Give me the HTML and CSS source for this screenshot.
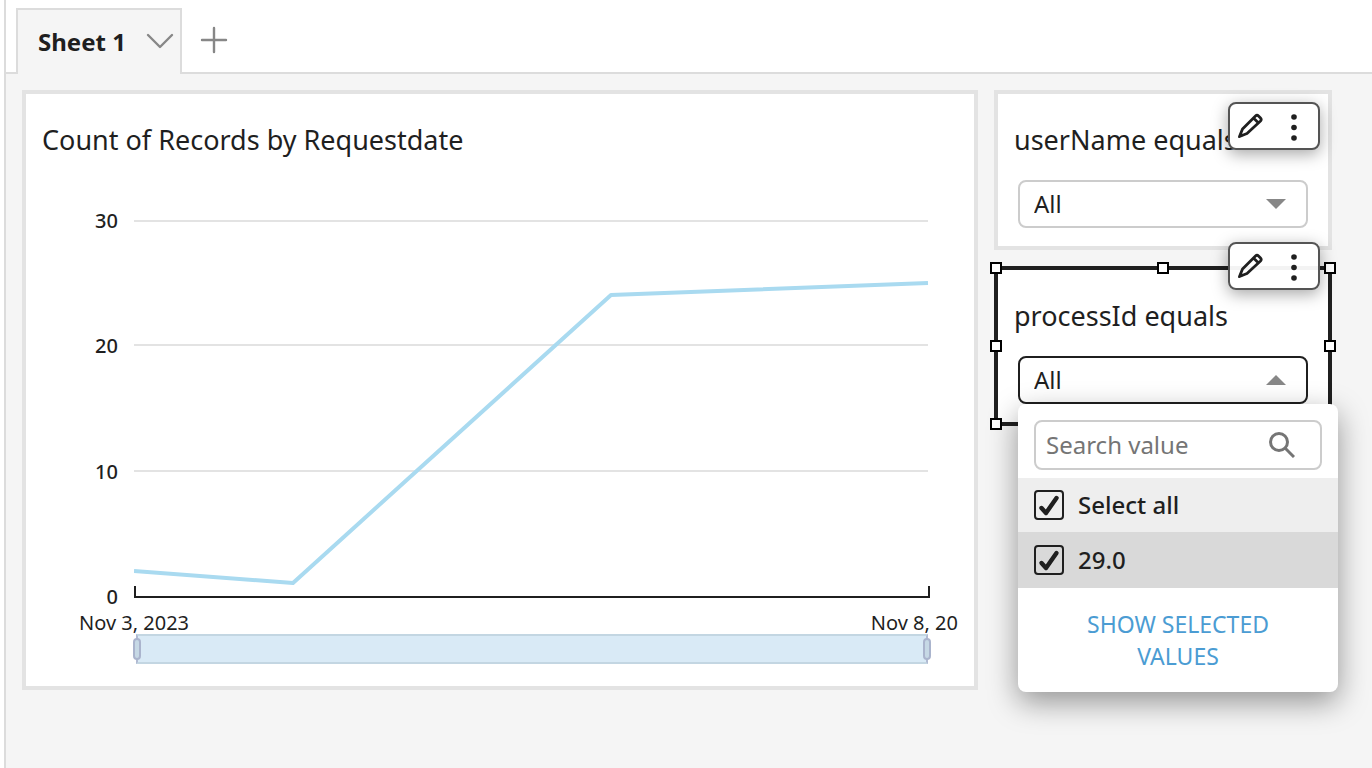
FILE: index.html
```
<!DOCTYPE html>
<html lang="en">
<head>
<meta charset="UTF-8">
<title>Sheet 1</title>
<link rel="stylesheet" href="styles.css">
</head>

<body>

<svg class="defs" aria-hidden="true">
	<symbol id="pencil" viewBox="0 0 28 28">
		<path d="M3.5 24.5 L6.5 17 L19.5 4 Q21 2.5 22.5 4 L24.5 6 Q26 7.5 24.5 9 L11 21.5 Z M17.5 6 L22.5 11" fill="none" stroke="currentColor" stroke-width="2.8" stroke-linejoin="round"/>
		<path d="M2 26 L4.5 20 L8 23.5 Z" fill="currentColor"/>
	</symbol>
	<symbol id="dots" viewBox="0 0 8 31">
		<circle cx="4" cy="6" r="2.8"/>
		<circle cx="4" cy="16.5" r="2.8"/>
		<circle cx="4" cy="27" r="2.8"/>
	</symbol>
</svg>

<div id="wrapper">
	<div id="tabs">
		<div class="tab activetab">
			<a href="#sheet">Sheet 1</a>
			<button type="button" class="icon" aria-label="Sheet menu">
				<svg width="28" height="18" viewBox="0 0 28 18"><path d="M2 2 L14 14 L26 2" fill="none" stroke="#878787" stroke-width="2.4" stroke-linecap="round" stroke-linejoin="round"/></svg>
			</button>
		</div>
		<button type="button" class="icon addtab" aria-label="Add sheet">
			<svg width="28" height="28" viewBox="0 0 28 28"><path d="M14 2 V26 M2 14 H26" stroke="#878787" stroke-width="2.4" stroke-linecap="round"/></svg>
		</button>
	</div><!-- tabs -->

	<div id="sheet">
		<div class="card chart">
			<h2>Count of Records by Requestdate</h2>
			<div class="plot">
				<div class="yaxis">
					<span>30</span>
					<span>20</span>
					<span>10</span>
					<span>0</span>
				</div>
				<svg class="lines" viewBox="0 0 796 378" preserveAspectRatio="none">
					<path class="gridline" d="M0 1 H794 M0 125 H794 M0 251 H794"/>
					<path class="axis" d="M1 366 V377 H795 V366"/>
					<polyline class="series" points="0,351 159,363 477,75 794,63"/>
				</svg>
			</div>
			<div class="xaxis">
				<span>Nov 3, 2023</span>
				<span>Nov 8, 20</span>
			</div>
			<div class="brush">
				<input type="range" min="0" max="100" value="0" aria-label="Range start">
				<input type="range" min="0" max="100" value="100" aria-label="Range end">
			</div>
		</div><!-- chart -->

		<div class="filters">
			<div class="card filter">
				<label for="username">userName equals</label>
				<div class="dropdown">
					<select id="username"><option>All</option></select>
					<svg class="arrow" width="20" height="10" viewBox="0 0 20 10"><path d="M0 0 H20 L10 10 Z"/></svg>
				</div>
				<div class="tools">
					<button type="button" class="icon" aria-label="Edit"><svg width="28" height="28"><use href="#pencil"/></svg></button>
					<button type="button" class="icon" aria-label="More"><svg width="8" height="31"><use href="#dots"/></svg></button>
				</div>
			</div>

			<div class="card filter selected">
				<label for="processid">processId equals</label>
				<i class="handle nw"></i><i class="handle n"></i><i class="handle ne"></i>
				<i class="handle w"></i><i class="handle e"></i>
				<i class="handle sw"></i><i class="handle se"></i>
				<div class="dropdown open">
					<select id="processid"><option>All</option></select>
					<svg class="arrow" width="20" height="10" viewBox="0 0 20 10"><path d="M0 10 H20 L10 0 Z"/></svg>
					<div class="menu">
						<div class="search">
							<input type="text" placeholder="Search value" aria-label="Search value">
							<svg width="26" height="26" viewBox="0 0 26 26"><circle cx="10" cy="10" r="8.5"/><path d="M16 16 L25 25"/></svg>
						</div>
						<label class="option all"><input type="checkbox" checked><span>Select all</span></label>
						<label class="option"><input type="checkbox" checked><span>29.0</span></label>
						<button type="button" class="show">SHOW SELECTED VALUES</button>
					</div>
				</div>
				<div class="tools">
					<button type="button" class="icon" aria-label="Edit"><svg width="28" height="28"><use href="#pencil"/></svg></button>
					<button type="button" class="icon" aria-label="More"><svg width="8" height="31"><use href="#dots"/></svg></button>
				</div>
			</div>
		</div><!-- filters -->
	</div><!-- sheet -->
</div><!-- wrapper -->

</body>
</html>
```
FILE: styles.css
```
* {
	box-sizing: border-box;
}

body {
	margin: 0;
	padding-left: 4px;
	font: 24px/32px "Noto Sans", "Open Sans", sans-serif;
	color: #1f1f1f;
	background: #fff;
}

button, input, select {
	margin: 0;
	font: inherit;
	color: inherit;
}

svg {
	display: block;
	fill: currentColor;
}

.defs {
	position: absolute;
	width: 0;
	height: 0;
}

.icon {
	padding: 0;
	border: none;
	background: none;
	cursor: pointer;
}

#wrapper {
	display: flex;
	flex-direction: column;
	min-height: 100vh;
	border-left: 2px solid #dcdcdc;
	background: #f5f5f5;
}

/* sheet tabs */
#tabs {
	display: flex;
	align-items: flex-end;
	height: 74px;
	padding-left: 10px;
	background: linear-gradient(#dcdcdc, #dcdcdc) bottom / 100% 2px no-repeat #fff;
}

.tab {
	display: flex;
	align-items: center;
	gap: 20px;
	height: 66px;
	padding: 0 6px 0 20px;
	border: 2px solid #dcdcdc;
	border-bottom: none;
}

.tab a {
	font-weight: bold;
	color: inherit;
	text-decoration: none;
}

.activetab {
	background: #f5f5f5;
}

.addtab {
	margin: 0 18px 20px;
}

/* sheet contents */
#sheet {
	display: grid;
	grid-template-columns: minmax(0, 1fr) 338px;
	gap: 16px;
	align-items: start;
	padding: 16px 40px 16px 16px;
}

.card {
	border: 4px solid #e3e3e3;
	background: #fff;
}

/* line chart */
.chart {
	padding: 28px 16px 22px;
}

.chart h2 {
	margin: 0 0 62px;
	font-size: 27px;
	font-weight: normal;
	line-height: 36px;
}

.plot {
	display: flex;
	gap: 16px;
	height: 378px;
	margin: 0 28px 10px 0;
}

.yaxis {
	display: flex;
	flex-direction: column;
	justify-content: space-between;
	width: 76px;
	margin: -11px 0;
	font-size: 20px;
	font-weight: 500;
	line-height: 24px;
	text-align: right;
}

.lines {
	flex: 1;
	min-width: 0;
	height: 100%;
}

.lines path, .lines polyline {
	fill: none;
	vector-effect: non-scaling-stroke;
}

.gridline {
	stroke: #e3e3e3;
	stroke-width: 2;
}

.axis {
	stroke: #1f1f1f;
	stroke-width: 2;
}

.series {
	stroke: #a9daf0;
	stroke-width: 4;
	stroke-linejoin: round;
}

.xaxis {
	display: flex;
	justify-content: space-between;
	height: 26px;
	padding-left: 37px;
	font-size: 20px;
	line-height: 30px;
	white-space: nowrap;
}

.brush {
	display: flex;
	height: 30px;
	margin: 0 30px 0 94px;
	border: 2px solid #c3d6e2;
	border-color: #c3d6e2 #b1bad2;
	background: #d9eaf6;
}

.brush input {
	flex: 1;
	min-width: 0;
	height: 26px;
	margin-left: -5px;
	background: none;
	appearance: none;
}

.brush input:last-child {
	margin: 0 -5px 0 0;
}

.brush input::-webkit-slider-thumb {
	width: 8px;
	height: 22px;
	border: 2px solid #aab4cd;
	border-radius: 4px;
	background: #c6d8e5;
	appearance: none;
}

/* filter controls */
.filters {
	display: grid;
	gap: 16px;
}

.filter {
	position: relative;
	height: 160px;
	padding: 28px 20px 0;
}

.filter > label {
	display: block;
	margin: 0 -4px 22px;
	font-size: 27px;
	line-height: 36px;
	white-space: nowrap;
}

.selected {
	border-color: #1f1f1f;
}

.dropdown {
	position: relative;
}

.dropdown select {
	display: block;
	width: 290px;
	height: 48px;
	padding: 0 14px;
	border: 2px solid #ccc;
	border-radius: 8px;
	background: #fff;
	appearance: none;
}

.open select {
	border-color: #1f1f1f;
}

.arrow {
	position: absolute;
	top: 19px;
	right: 22px;
	fill: #878787;
	pointer-events: none;
}

.tools {
	position: absolute;
	top: 8px;
	right: 8px;
	display: flex;
	justify-content: space-between;
	align-items: center;
	width: 92px;
	height: 48px;
	padding: 0 20px 0 6px;
	border: 2px solid #545454;
	border-radius: 8px;
	background: #fff;
	box-shadow: 0 4px 16px rgba(0, 0, 0, .35);
}

.selected .tools {
	top: -28px;
	background: rgba(255, 255, 255, .95);
}

.handle {
	position: absolute;
	width: 12px;
	height: 12px;
	border: 2px solid #000;
	background: #fff;
}

.nw, .n, .ne {
	top: -8px;
}

.sw, .se {
	bottom: -8px;
}

.w, .e {
	top: calc(50% - 6px);
}

.nw, .w, .sw {
	left: -8px;
}

.ne, .e, .se {
	right: -8px;
}

.n {
	left: calc(50% - 6px);
}

/* value list */
.menu {
	position: absolute;
	top: 100%;
	left: 0;
	width: 320px;
	padding: 16px 0;
	border-radius: 8px;
	background: #fff;
	box-shadow: 0 10px 30px rgba(0, 0, 0, .4);
}

.search {
	display: flex;
	align-items: center;
	height: 50px;
	margin: 0 16px 8px;
	padding: 0 25px 0 10px;
	border: 2px solid #ccc;
	border-radius: 8px;
}

.search input {
	flex: 1;
	min-width: 0;
	padding: 0;
	border: none;
	outline: none;
	background: none;
}

.search input::placeholder {
	color: #757575;
}

.search svg {
	fill: none;
	stroke: #757575;
	stroke-width: 3;
}

.option {
	display: flex;
	align-items: center;
	gap: 14px;
	height: 56px;
	padding: 0 16px;
	font-weight: 500;
	background: #d9d9d9;
}

.option.all {
	height: 54px;
	background: #eee;
}

.option input {
	width: 30px;
	height: 30px;
	border: 2px solid #1f1f1f;
	border-radius: 4px;
	appearance: none;
}

.option input:checked {
	background: url("data:image/svg+xml,%3Csvg xmlns='http://www.w3.org/2000/svg' viewBox='0 0 26 26'%3E%3Cpath d='M5.5 16 L10 21 L20.5 6' fill='none' stroke='%231f1f1f' stroke-width='4.4' stroke-linecap='round' stroke-linejoin='round'/%3E%3C/svg%3E") center / 26px no-repeat;
}

.show {
	display: block;
	width: 100%;
	padding: 20px 60px 4px;
	border: none;
	background: none;
	font-size: 23px;
	color: #4b9cd3;
	cursor: pointer;
}
```
